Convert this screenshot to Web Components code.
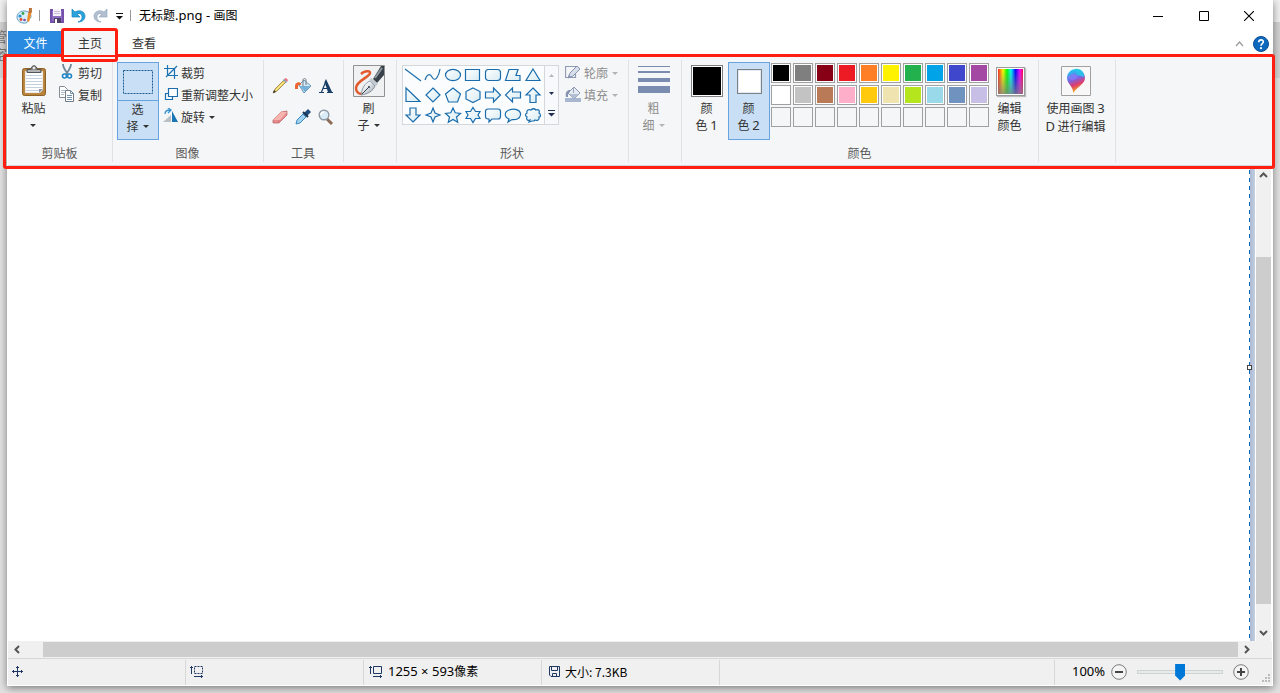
<!DOCTYPE html>
<html lang="zh-CN">
<head>
<meta charset="utf-8">
<title>无标题.png - 画图</title>
<style>
html,body{margin:0;height:100%;overflow:hidden}
body{background:linear-gradient(#f0f0f0 0 22px,#d2d2d2 22px 78px,#e2e2e2 78px);font:12px/17px "Noto Sans CJK SC","Noto Sans",sans-serif;color:#333}
</style>
</head>
<body>
<back-page></back-page>
<paint-app></paint-app>
<script>
const BASE=`*{box-sizing:border-box}button{font:inherit;color:inherit;background:none;border:0;padding:0;margin:0}svg{display:block}.lat{font-family:"Noto Sans",sans-serif;font-size:13px}`;
function define(tag,css,html){
  customElements.define(tag,class extends HTMLElement{
    connectedCallback(){
      if(this.shadowRoot)return;
      this.attachShadow({mode:'open'}).innerHTML='<style>'+BASE+css+'</style>'+(typeof html==='function'?html(this):html);
    }
  });
}
const svg=(w,h,c)=>`<svg width="${w}" height="${h}" viewBox="0 0 ${w} ${h}" fill="none" aria-hidden="true">${c}</svg>`;
const B='stroke="#1a6dad" stroke-width="1.200" fill="url(#g)"';
const shape=c=>svg(20,20,`<defs><linearGradient id="g" x2="1" y2="1"><stop stop-color="#fff"/><stop offset="1" stop-color="#d6ebf2"/></linearGradient></defs><g ${B}>${c}</g>`);
const ICONS={
  app:svg(16,16,`<path d="M1 9C1 5 5 2.500 9 3c3 .3 6 2 6 5s-2 3-3 3.500 0 2-1 3c-2 1.500-10 .5-10-5.500z" fill="#d9eef9" stroke="#5d9fc4"/><circle cx="4" cy="8" r="1.600" fill="#2c8fd0"/><circle cx="7" cy="5.500" r="1.400" fill="#3aa34a"/><circle cx="5" cy="11.500" r="1.400" fill="#e0492c"/><circle cx="8.500" cy="12" r="1.300" fill="#7b51a8"/><path d="M14 1l2 1-1 5-2 7-2-1 1-7z" fill="#f08a24"/><path d="M13 0h3l-.5 5h-3z" fill="#b8743a"/>`),
  save:svg(14,14,`<path d="M1 1h12v12H1z" fill="#8d6fc0" stroke="#7450ac" stroke-width="2"/><path d="M3 0h8v7H3z" fill="#f7f3fb"/><path d="M4 2.500h6M4 4.500h6" stroke="#c7bad9"/><path d="M4 9h7v5H4z" fill="#4d3f66"/><path d="M5 10h2v4H5z" fill="#fff"/>`),
  undo:svg(15,16,`<path d="M1 1v8h8L6 6c3-1 5 0 5 3 0 2-1 4-4 5 5 0 7-3 7-6 0-4-5-7-10-4z" fill="#2ba3dd" stroke="#1681bf" stroke-width=".7"/>`),
  redo:svg(15,16,`<path d="M14 1v8H6l3-3C6 5 4 6 4 9c0 2 1 4 4 5-5 0-7-3-7-6 0-4 5-7 10-4z" fill="#b2bfd0" stroke="#98a9c0" stroke-width=".7"/>`),
  more:svg(7,7,`<path d="M0 .5h7" stroke="#111"/><path d="M0 3h7L3.500 6.500z" fill="#111"/>`),
  min:svg(10,10,`<path d="M0 5.500h10" stroke="#000"/>`),
  max:svg(10,10,`<path d="M.5.5h9v9h-9z" stroke="#000"/>`),
  close:svg(10,10,`<path d="M0 0l10 10M10 0L0 10" stroke="#000" stroke-width="1.100"/>`),
  fold:svg(9,6,`<path d="M1 5l3.500-4L8 5" stroke="#9a9a9a" stroke-width="1.200"/>`),
  help:svg(16,16,`<circle cx="8" cy="8" r="7.500" fill="#0e68bd" stroke="#0b4f92"/><path d="M5.700 6.200C5.700 3 10.500 3.200 10.300 6 10.200 7.600 8 7.700 8 9.800" stroke="#fff" stroke-width="1.700"/><circle cx="8" cy="12.200" r="1.100" fill="#fff"/>`),
  paste:svg(26,32,`<rect x="1.500" y="3.500" width="23" height="27" rx="2" fill="#b98136" stroke="#8f6228"/><path d="M4 6h18v19l-3 3H4z" fill="#fff" stroke="#bfae8f" stroke-width=".5"/><path d="M5 10.500h16M5 13.500h16M5 16.500h16M5 19.500h16M5 22.500h16M5 25.500h13" stroke="#c3d0de"/><path d="M18 28v-4h4z" fill="#8b95a3"/><path d="M6 7.500V4.500h4c0-5 6-5 6 0h4v3z" fill="#8a8a8a" stroke="#555"/><path d="M7 6h12" stroke="#ddd"/><circle cx="13" cy="3" r="1.200" fill="#eee"/>`),
  select:svg(32,26,`<path d="M1.500 1.500h29v23h-29z" fill="#c9dff5" stroke="#195a91" stroke-dasharray="2 1"/>`),
  cut:svg(16,16,`<path d="M4 0c0 4 2 6 5 10M12 0c0 4-2 6-5 10" stroke="#6f8798" stroke-width="1.800"/><circle cx="5.500" cy="12" r="2" stroke="#1e86c8" stroke-width="1.600"/><circle cx="10.500" cy="12" r="2" stroke="#1e86c8" stroke-width="1.600"/>`),
  copy:svg(16,16,`<path d="M.5.5h5l3 3v8h-8z" fill="#fff" stroke="#838b95"/><path d="M2 4.500h4M2 6.500h4M2 8.500h3" stroke="#aab8c8"/><path d="M6.500 4.500h5l3 3v8h-8z" fill="#fff" stroke="#737c87"/><path d="M11.500 4.500v3h3M8 9.500h5M8 11.500h5M8 13.500h5" stroke="#7291ad"/>`),
  crop:svg(14,14,`<path d="M3.500 0v10.500H14M0 3.500h10.500V14M2 12L13 1" stroke="#1b74b4" stroke-width="1.200"/>`),
  resize:svg(14,14,`<path d="M1.500 6.500h7v6h-7z" fill="#f7fbfe" stroke="#1d6dad" stroke-width="1.200"/><path d="M4.500 1.500h9v8h-9z" fill="#fff" stroke="#1d6dad" stroke-width="1.200"/>`),
  rotate:svg(16,16,`<path d="M0 14L8 7v7z" fill="#b8c0c6"/><path d="M9 3l6 11H9z" fill="#1b76b6"/><path d="M2 6c0-3 2-4 5-4M5 0l3 2-3 3" stroke="#3491d3" stroke-width="1.300"/>`),
  pencil:svg(16,16,`<path d="M1 15l2-4 9-9 2 2-9 9z" fill="#f3cf5c" stroke="#80713f" stroke-width=".7"/><path d="M12 1l3 3 1-2-2-2z" fill="#ed6f79"/><path d="M11 2l3 3 1-1-3-3z" fill="#79a0bd"/><path d="M1 15l1-3 2 2z" fill="#333"/><path d="M4 12l7-7" stroke="#fff0a0"/>`),
  bucket:svg(16,16,`<path d="M4 7l5-5 7 6-7 7z" fill="#d3e9f6" stroke="#477da4" stroke-width=".8"/><path d="M5 8l5 6 5-6z" fill="#74afd8"/><path d="M6 5C2 3-1 6 0 11h3c0-3 0-5 3-4z" fill="#ec6634"/><path d="M8 8V2c0-2 3-2 3 0v5" stroke="#727c88"/>`),
  text:svg(16,16,`<path d="M1 14.500h5M9 14.500h6M3.500 14L8 3M5 10.500h6" stroke="#183d66" stroke-width="1.200"/><path d="M8 1l6 13h-4L6.500 4z" fill="#183d66"/>`),
  eraser:svg(16,16,`<path d="M1 11l8-8 6-1v4l-8 8H1z" fill="#e78b8d" stroke="#b65e61" stroke-width=".7"/><path d="M1 11l8-8h6l-7 8z" fill="#f7b3ae"/><path d="M7 11v3" stroke="#d2797a"/>`),
  picker:svg(16,16,`<path d="M1 15l1-4 6-6 3 3-6 6z" fill="#9fd3f1" stroke="#3a8abe"/><path d="M9 4l4-4 3 3-4 4z" fill="#204c7c"/><path d="M8 3l5 5" stroke="#16324f" stroke-width="2"/>`),
  zoom:svg(16,16,`<path d="M9 10l5 5" stroke="#8b6b55" stroke-width="3"/><circle cx="6" cy="6" r="4.800" fill="#d9edf9" stroke="#8d9aa6" stroke-width="1.400"/><path d="M3 6c0-2 1-3 3-3" stroke="#fff" stroke-width="1.500"/>`),
  brush:svg(32,32,`<defs><linearGradient id="n" x2="1" y2="1"><stop offset=".3" stop-color="#f7f9fb"/><stop offset="1" stop-color="#8d9aa8"/></linearGradient></defs><path d="M.5.5h31v31H.5z" fill="#f0f1f2" stroke="#929292"/><path d="M8 9c3-3 9-4 9-1 0 4-14 8-14 15 0 4 3 6 6 6" stroke="#e2592c" stroke-width="2.500"/><path d="M8 30c1-7 4-12 9-14l5 5c-2 5-7 8-14 9z" fill="url(#n)" stroke="#76828e" stroke-width=".8"/><path d="M20 14L28 1h3v9l-7 8z" fill="#38414a"/><path d="M22 13L29 3" stroke="#8d979f" stroke-width="2"/><path d="M17 14l7 6" stroke="#c2c9d0" stroke-width="3"/><path d="M9 29l7-7" stroke="#36434e"/><circle cx="16" cy="22" r="1" fill="#36434e"/>`),
  outline:svg(16,16,`<path d="M11 2.500H.5v11h10V10" stroke="#8f9bb5" stroke-width="1.200"/><path d="M3 14l2-5 7-7 3 3-7 7z" fill="#d8deea" stroke="#8593ae"/><path d="M3 14l1-3 2 2z" fill="#8593ae"/>`),
  fill:svg(16,16,`<path d="M0 12h16v4H0z" fill="#a9b6cf"/><path d="M3 7l6-6 6 6-6 6z" fill="#e5eaf3" stroke="#8896b0"/><path d="M4 8h10l-5 5z" fill="#b3bfd4"/><path d="M8.500 7V1" stroke="#98a5bc"/><path d="M5 4C2 4 0 6 1 11h2c0-3 0-4 2-5z" fill="#8494b1"/>`),
  lines:svg(32,32,`<path d="M0 1.500h32" stroke="#7a8db0"/><path d="M0 7h32" stroke="#7a8db0" stroke-width="2"/><path d="M0 15h32" stroke="#7a8db0" stroke-width="4"/><path d="M0 24.500h32" stroke="#7a8db0" stroke-width="7"/>`),
  paint3d:svg(30,30,`<defs><linearGradient id="p" x1=".3" x2=".6" y2="1"><stop offset=".05" stop-color="#22c5ee"/><stop offset=".4" stop-color="#7667e9"/><stop offset=".65" stop-color="#dc3c71"/><stop offset=".9" stop-color="#f6a11c"/></linearGradient></defs><path d="M.5.5h29v29H.5z" fill="#f8f8f8" stroke="#a0a0a0"/><path d="M12 27c1-6-6-9-6-15 0-5 4-9 9-9s9 4 9 9c0 6-8 9-12 15z" fill="url(#p)"/><path d="M14 3c6-1 10 4 9 8l-7-2z" fill="#20cce9" opacity=".8"/><path d="M7 12c2-5 7-5 10-2-1 4-6 6-10 2z" fill="#8a79f7" opacity=".7"/>`),
  up:svg(9,6,`<path d="M1 5l3.500-3.500L8 5" stroke="#555" stroke-width="2"/>`),
  down:svg(9,6,`<path d="M1 1l3.500 3.500L8 1" stroke="#555" stroke-width="2"/>`),
  left:svg(6,9,`<path d="M5 1L1.500 4.500 5 8" stroke="#555" stroke-width="2"/>`),
  right:svg(6,9,`<path d="M1 1l3.500 3.500L1 8" stroke="#555" stroke-width="2"/>`),
  move:svg(11,11,`<path d="M0 5.500h11M5.500 0v11M4 1.500h3M4 9.500h3M1.500 4v3M9.500 4v3" stroke="#1f3864"/>`),
  selsize:svg(14,13,`<path d="M1.500 1v8M0 2.500h3M4 11.500h9M11.500 10v3" stroke="#1f3864"/><path d="M4.500 1.500h8v7h-8z" stroke="#1f3864" stroke-dasharray="2 1"/>`),
  imgsize:svg(14,13,`<path d="M1.500 1v8M0 2.500h3M4 11.500h9M11.500 10v3M4.500 1.500h8v7h-8z" stroke="#1f3864"/>`),
  disk:svg(11,11,`<path d="M.5.5h10v10H2l-1.500-1.500zM2.500.5v4h6v-4M3.500 10.500v-3h4v3" stroke="#1f3864"/>`),
  minus:svg(16,16,`<circle cx="8" cy="8" r="7.300" fill="#f4f4f4" stroke="#7b7b7b"/><path d="M4 8h8" stroke="#444" stroke-width="2"/>`),
  plus:svg(16,16,`<circle cx="8" cy="8" r="7.300" fill="#f4f4f4" stroke="#7b7b7b"/><path d="M4 8h8M8 4v8" stroke="#444" stroke-width="2"/>`),
  grip:svg(8,8,`<path d="M6 0h2v2H6zM6 3h2v2H6zM3 3h2v2H3zM6 6h2v2H6zM3 6h2v2H3zM0 6h2v2H0z" fill="#bbb"/>`)
};
const SHAPES=[
 ['直线','<path d="M2 4l16 12"/>'],['曲线','<path fill="none" d="M2 15c2-6 5-7 7-3 3 6 7-1 8-8"/>'],['椭圆形','<ellipse cx="10" cy="10" rx="7.500" ry="5.700"/>'],['矩形','<path d="M2.500 4.500h14v11h-14z"/>'],['圆角矩形','<rect x="2.500" y="4.500" width="15" height="11" rx="3"/>'],['多边形','<path d="M6 4.500h9l-2 6h4v5H2.500z"/>'],['三角形','<path d="M10 4l7 11.500H3z"/>'],
 ['直角三角形','<path d="M3 3l14 13.500H3z"/>'],['菱形','<path d="M10 3l7 7-7 7-7-7z"/>'],['五边形','<path d="M10 3l7.500 6-3 8h-9l-3-8z"/>'],['六边形','<path d="M10 3l7 3.500v7.500l-7 3.500-7-3.500V6.500z"/>'],['右箭头','<path d="M2.500 7h8V3l7 7-7 7v-4h-8z"/>'],['左箭头','<path d="M17.500 7h-8V3l-7 7 7 7v-4h8z"/>'],['上箭头','<path d="M10 3l7 7h-4v7.500H7V10H3z"/>'],
 ['下箭头','<path d="M10 17l7-7h-4V3H7v7H3z"/>'],['四角星','<path d="M10 3l2 5 5 2-5 2-2 5-2-5-5-2 5-2z"/>'],['五角星','<path d="M10 3l2.200 4.800 5.300.6-4 3.600 1.200 5.200L10 14.500l-4.700 2.700L6.500 12l-4-3.600 5.300-.6z"/>'],['六角星','<path d="M10 2.500l2.500 4h4.500L15 10l2 3.500h-4.500l-2.500 4-2.500-4H3L5 10 3 6.500h4.500z"/>'],['圆角标注','<path d="M5 4h10q2.500 0 2.500 2.500v5Q17.500 14 15 14H9l-3 3v-3H5q-2.500 0-2.500-2.500v-5Q2.500 4 5 4z"/>'],['椭圆标注','<path d="M6 14c-5-2-5-7 0-9 6-2 12 0 11.500 5-.5 4-5 5-8.500 4.500L5 17z"/>'],['云形标注','<path d="M7 15c-3 1-4-1-3-3-2-1-2-3 0-4-1-3 2-4 4-3 2-2 4-1 5 0 3-1 4 1 3 3 2 1 2 4 0 4 1 3-2 4-4 3l-1 1H9l-3 1z"/>']
];
const COLORS='#000000 #7f7f7f #880015 #ed1c24 #ff7f27 #fff200 #22b14c #00a2e8 #3f48cc #a349a4 #ffffff #c3c3c3 #b97a57 #ffaec9 #ffc90e #efe4b0 #b5e61d #99d9ea #7092be #c8bfe7'.split(' ');

/* A sliver of the page that lies behind the window, seen at its left edge */
define('back-page',`:host{position:absolute;left:0;top:27px;width:7px;height:36px;overflow:hidden;color:#777}
div{display:flex;flex-direction:column;width:7px;align-items:flex-end;font-size:14px;line-height:18px}`,'<div aria-hidden="true"><span>管</span><span>密</span></div>');

define('paint-icon',':host{display:block;flex:none}',e=>ICONS[e.getAttribute('name')]||'');
define('drop-arrow',':host{display:inline-block;width:0;height:0;border:3px solid transparent;border-top-color:currentColor;border-bottom:0;vertical-align:3px;margin-left:4px}:host([dim]){color:#b4b4b4}','');

define('title-bar',`:host{display:flex;align-items:center;height:31px;color:#000}
.quick{display:flex;align-items:center;padding-left:8px;gap:7px}i{width:1px;height:11px;background:#999}h1{font:inherit;margin:0;padding:0 0 2px 8px}
.save{margin-left:3px}.more{margin-left:1px;padding-top:2px}
.win{margin-left:auto;display:flex}.win button{width:45px;height:30px;display:grid;place-items:center}.win button:first-child{width:46px}.win button:last-child{width:46px}`,
`<div class="quick"><paint-icon name="app"></paint-icon><i></i><button class="save" aria-label="保存"><paint-icon name="save"></paint-icon></button><button aria-label="撤消"><paint-icon name="undo"></paint-icon></button><button aria-label="重做"><paint-icon name="redo"></paint-icon></button><button class="more" aria-label="自定义"><paint-icon name="more"></paint-icon></button><i></i></div>
<h1>无标题<span class="lat">.png - </span>画图</h1>
<div class="win"><button aria-label="最小化"><paint-icon name="min"></paint-icon></button><button aria-label="最大化"><paint-icon name="max"></paint-icon></button><button aria-label="关闭"><paint-icon name="close"></paint-icon></button></div>`);

define('ribbon-tab',`:host{display:block;position:relative;width:54px}button{width:100%;height:24px;padding-bottom:2px}
:host([kind=file]){width:55px}:host([kind=file]) button{background:#2a8adf;color:#fff}:host([active]){z-index:2}:host([active]) button{background:#f5f6f7}
:host([active])::after{content:"";position:absolute;inset:-3px -1px -7px -2px;border:3px solid #ff1e10;border-radius:3px;pointer-events:none}`,
`<button role="tab"><slot></slot></button>`);
define('ribbon-tabs',`:host{display:flex;height:24px}.end{margin-left:auto;display:flex;align-items:center;gap:9px;padding:2px 3px 0 0}`,
`<ribbon-tab kind="file">文件</ribbon-tab><ribbon-tab active>主页</ribbon-tab><ribbon-tab>查看</ribbon-tab>
<div class="end"><button aria-label="折叠功能区"><paint-icon name="fold"></paint-icon></button><button aria-label="帮助"><paint-icon name="help"></paint-icon></button></div>`);

define('ribbon-group',`:host{display:flex;flex-direction:column;flex:none;width:var(--w);height:102px;border-right:1px solid #e1e2e4}
.body{flex:1;display:flex;align-items:flex-start;padding:2px 0 0 4px}.name{text-align:center;height:18px;padding-right:1px;color:#5a5a5a}`,
e=>`<div class="body"><slot></slot></div><div class="name">${e.getAttribute('label')||''}</div>`);

define('big-button',`:host{display:block;flex:none;width:var(--bw,42px)}
button{width:100%;height:78px;border:1px solid transparent;display:flex;flex-direction:column;align-items:center;padding-top:2px}
.art{display:flex;align-items:center;justify-content:center;height:32px;margin-bottom:2px}.txt{padding-right:1px}
:host([on]) button{background:#c9dff5;border-color:#66a3e0}
:host([split]) .art{align-self:stretch;height:36px;margin:0 0 -1px;padding-bottom:2px;border-bottom:1px solid #66a3e0}
:host([disabled]){color:#8d8d8d}`,
e=>`<button ${e.hasAttribute('disabled')?'disabled':''}><span class="art"><slot name="art"></slot></span><span class="txt"><slot></slot></span></button>`);

define('small-button',`:host{display:block}button{display:flex;align-items:center;height:22px;gap:var(--gap,3px);white-space:nowrap}:host([disabled]){color:#8d8d8d}.art{display:flex;width:16px;justify-content:center}`,
e=>`<button ${e.hasAttribute('disabled')?'disabled':''}><span class="art"><paint-icon name="${e.getAttribute('icon')}"></paint-icon></span><span><slot></slot></span></button>`);

define('tool-grid',`:host{display:grid;grid-template-columns:repeat(3,23px);grid-auto-rows:31px;padding-top:8px}button{display:grid;place-items:center}`,
['铅笔:pencil','填充:bucket','文本:text','橡皮擦:eraser','取色:picker','放大镜:zoom'].map(t=>{const[a,b]=t.split(':');return `<button aria-label="${a}"><paint-icon name="${b}"></paint-icon></button>`}).join(''));

define('shape-gallery',`:host{display:flex;border:1px solid #d5d7da;background:#fbfcfd;margin:3px 0 0 1px;height:60px}
.grid{display:grid;grid-template-columns:repeat(7,20px);grid-auto-rows:20px;padding-right:1px;margin-top:-1px}.grid button{display:grid;place-items:center}
.side{width:14px;border-left:1px solid #d5d7da;display:grid;background:#f8f9fb}.side button{display:grid;place-items:center}`,
`<div class="grid">${SHAPES.map(s=>`<button aria-label="${s[0]}">${shape(s[1])}</button>`).join('')}</div>
<div class="side"><button aria-label="向上">${svg(5,3,'<path d="M0 3l2.500-3L5 3z" fill="#b4b7bd"/>')}</button><button aria-label="向下">${svg(5,3,'<path d="M0 0h5L2.500 3z" fill="#222f55"/>')}</button><button aria-label="更多">${svg(7,7,'<path d="M0 .5h7" stroke="#222f55"/><path d="M0 3h7L3.500 6.500z" fill="#222f55"/>')}</button></div>`);

define('color-swatch',`:host{display:block;box-sizing:border-box;width:var(--s);height:var(--s);border:1px solid #808080;padding:1px;background:var(--in,#fff)}div{height:100%;background:var(--c)}`,'<div></div>');
define('color-palette',`:host{display:grid;grid-template-columns:repeat(10,20px);grid-auto-rows:20px;gap:2px;padding:1px 0 0 1px}
button{border:1px solid #a0a0a0;padding:1px}button.empty{background:#f5f6f7}`,
[...Array(30)].map((_,i)=>COLORS[i]?`<button aria-label="${COLORS[i]}" style="background:linear-gradient(${COLORS[i]},${COLORS[i]}) content-box,#fff"></button>`:'<button class="empty" aria-label="自定义颜色"></button>').join(''));
define('spectrum-art',`:host{display:block;box-sizing:border-box;width:29px;height:29px;border:1px solid #9b9b9b;padding:1px;background:#fff;box-shadow:1px 1px 1px #bbb}
div{height:100%;background:linear-gradient(transparent,#808080cc),linear-gradient(90deg,#f22,#ff0 20%,#0f0 36%,#0ff 52%,#00f 70%,#f0f 88%,#f04)}`,'<div></div>');

define('paint-ribbon',`:host{display:flex;position:relative;box-sizing:border-box;height:111px;background:#f5f6f7;border-top:1px solid #e8e8e9;border-bottom:1px solid #d5d7da;padding-top:4px;z-index:1}
:host::after{content:"";position:absolute;inset:-2px -3px -4px -5px;border:3px solid #ff1e10;border-radius:3px;pointer-events:none}
.col{display:flex;flex-direction:column;margin:-1px 0 0 4px}.paste{margin-left:1px}.image{--gap:2px}.shapes{margin-left:6px}`,
`<ribbon-group label="剪贴板" style="--w:105px"><big-button class="paste"><paint-icon slot="art" name="paste"></paint-icon>粘贴<br><drop-arrow style="margin:0"></drop-arrow></big-button><div class="col"><small-button icon="cut">剪切</small-button><small-button icon="copy">复制</small-button></div></ribbon-group>
<ribbon-group label="图像" style="--w:151px"><big-button on split><paint-icon slot="art" name="select"></paint-icon>选<br>择<drop-arrow></drop-arrow></big-button><div class="col image"><small-button icon="crop">裁剪</small-button><small-button icon="resize">重新调整大小</small-button><small-button icon="rotate">旋转<drop-arrow></drop-arrow></small-button></div></ribbon-group>
<ribbon-group label="工具" style="--w:80px"><tool-grid></tool-grid></ribbon-group>
<ribbon-group style="--w:53px"><big-button><paint-icon slot="art" name="brush"></paint-icon>刷<br>子<drop-arrow></drop-arrow></big-button></ribbon-group>
<ribbon-group label="形状" style="--w:232px"><shape-gallery></shape-gallery><div class="col shapes"><small-button icon="outline" disabled>轮廓<drop-arrow dim></drop-arrow></small-button><small-button icon="fill" disabled>填充<drop-arrow dim></drop-arrow></small-button></div></ribbon-group>
<ribbon-group style="--w:53px"><big-button disabled><paint-icon slot="art" name="lines"></paint-icon>粗<br>细<drop-arrow dim></drop-arrow></big-button></ribbon-group>
<ribbon-group label="颜色" style="--w:357px"><big-button><color-swatch slot="art" style="--s:32px;--c:#000"></color-swatch>颜<br>色 <span class="lat">1</span></big-button><big-button on><color-swatch slot="art" style="--s:25px;--c:#fff;--in:#dfecf8"></color-swatch>颜<br>色 <span class="lat">2</span></big-button><color-palette></color-palette><big-button><spectrum-art slot="art"></spectrum-art>编辑<br>颜色</big-button></ribbon-group>
<ribbon-group style="--w:77px"><big-button style="--bw:66px"><paint-icon slot="art" name="paint3d"></paint-icon>使用画图 <span class="lat">3</span><br><span class="lat">D</span> 进行编辑</big-button></ribbon-group>`);

define('scroll-bar',`:host{display:flex;background:#f0f0f0;flex:none}:host([dir=v]){flex-direction:column;width:15px}:host([dir=h]){height:15px}
button{display:grid;place-items:center;flex:none}:host([dir=v]) button{height:17px}:host([dir=h]) button{width:17px}
.track{flex:1;display:flex}:host([dir=v]) .track{flex-direction:column}.a{flex:var(--a) 0 0}.t{flex:var(--t) 0 0;background:#cdcdcd}.z{flex:var(--z) 0 0}`,
e=>{const v=e.getAttribute('dir')==='v';return `<button aria-label="向前"><paint-icon name="${v?'up':'left'}"></paint-icon></button><div class="track"><div class="a"></div><div class="t"></div><div class="z"></div></div><button aria-label="向后"><paint-icon name="${v?'down':'right'}"></paint-icon></button>`});

define('canvas-view',`:host{flex:1;display:flex;min-height:0;background:#fff}
.page{flex:1;position:relative;background:repeating-linear-gradient(#fff 0 4px,#0069bd 4px 8px) right/1px 100% no-repeat #fff}
.page::after{content:"";box-sizing:border-box;position:absolute;right:-2px;top:199px;width:5px;height:5px;border:1px solid #444;background:#fff}
.edge{width:5px;margin-right:1px;background:linear-gradient(90deg,#abb9d3,#c3cfe0)}scroll-bar{margin-right:1px}`,
`<div class="page" role="img" aria-label="画布"></div><div class="edge"></div><scroll-bar dir="v" style="--a:74;--t:348;--z:20"></scroll-bar>`);

define('zoom-slider',`:host{display:block;width:86px}
input{appearance:none;display:block;width:100%;height:18px;margin:0;background:linear-gradient(#e7eaea,#e7eaea) center/84px 2px no-repeat,linear-gradient(#cfd3d3,#cfd3d3) center/86px 4px no-repeat}
input::-webkit-slider-thumb{appearance:none;width:10px;height:17px;background:#0078d7;border:0;border-radius:0;clip-path:polygon(0 0,100% 0,100% 70%,50% 100%,0 70%)}`,
`<input type="range" min="0" max="100" value="50" aria-label="缩放">`);
define('status-cell',`:host{display:flex;box-sizing:border-box;align-items:center;flex:none;width:178px;gap:5px;padding:0 0 2px 4px;border-right:1px solid #d7d7d7;height:25px}:host([icon=imgsize]){padding-left:5px}:host([icon=disk]){padding-left:7px}:host([grow]){flex:1}`,
e=>(e.getAttribute('icon')?`<paint-icon name="${e.getAttribute('icon')}"></paint-icon>`:'')+'<span><slot></slot></span>');
define('status-bar',`:host{display:flex;box-sizing:border-box;align-items:center;height:27px;border-top:1px solid #d7d7d7;background:#f0f0f0;color:#000}
.zoom{display:flex;align-items:center;width:217px;padding-left:17px}.val{padding-bottom:1px}.zoom button:first-of-type{margin:0 10px 0 6px}.zoom button:last-of-type{margin-left:10px}.grip{margin:11px 2px 0 auto}`,
`<status-cell icon="move"></status-cell><status-cell icon="selsize"></status-cell><status-cell icon="imgsize"><span class="lat" style="font:13px 'Noto Sans'">1255 × 593</span>像素</status-cell><status-cell icon="disk">大小: 7.3KB</status-cell><status-cell grow></status-cell>
<div class="zoom"><span class="lat val">100%</span><button aria-label="缩小"><paint-icon name="minus"></paint-icon></button><zoom-slider></zoom-slider><button aria-label="放大"><paint-icon name="plus"></paint-icon></button><paint-icon class="grip" name="grip"></paint-icon></div>`);
define('paint-app',`:host{display:flex;flex-direction:column;position:relative;box-sizing:border-box;height:calc(100vh - 7px);margin:0 7px;padding:0 1px 1px;background:#fff;box-shadow:0 2px 8px #0007}
.h{display:flex;background:#f0f0f0;padding:1px 17px 1px 0}scroll-bar{flex:1}`,
`<title-bar></title-bar><ribbon-tabs role="tablist"></ribbon-tabs><paint-ribbon></paint-ribbon><canvas-view></canvas-view><div class="h"><scroll-bar dir="h" style="--a:18;--t:1195;--z:0"></scroll-bar></div><status-bar></status-bar>`);
</script>
</body>
</html>
